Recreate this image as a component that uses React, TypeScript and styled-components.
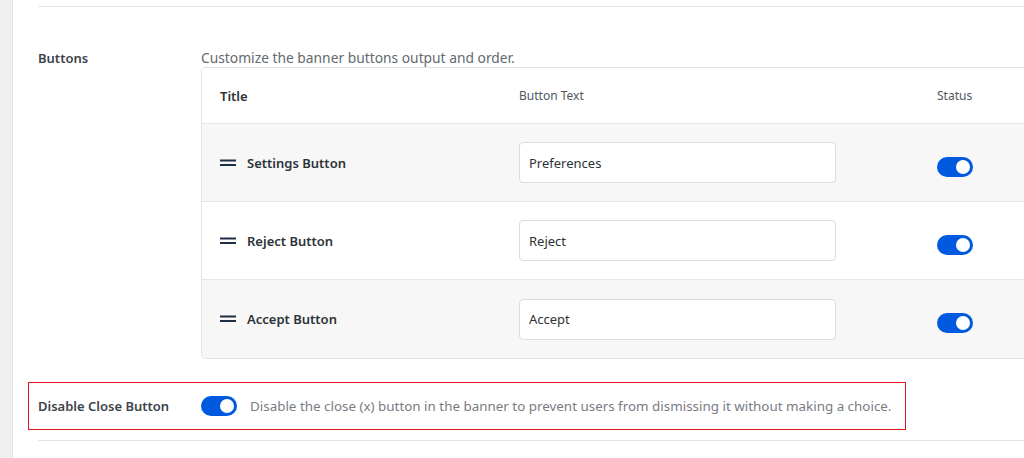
import React from "react";
import styled, { createGlobalStyle } from "styled-components";

const GlobalStyle = createGlobalStyle`
  html, body {
    margin: 0;
    padding: 0;
    background: #f0f0f1;
    font-family: "Noto Sans", "Open Sans", sans-serif;
  }
  * {
    box-sizing: border-box;
  }
`;

interface ButtonRow {
  id: string;
  title: string;
  text: string;
  enabled: boolean;
}

const rows: ButtonRow[] = [
  { id: "settings", title: "Settings Button", text: "Preferences", enabled: true },
  { id: "reject", title: "Reject Button", text: "Reject", enabled: true },
  { id: "accept", title: "Accept Button", text: "Accept", enabled: true },
];

const Toggle = ({ on }: { on: boolean }) => (
  <Switch $on={on}>
    <Knob $on={on} />
  </Switch>
);

const DragHandle = () => (
  <svg width="16" height="8" viewBox="0 0 16 8" aria-hidden="true">
    <rect x="0" y="0.5" width="16" height="2" fill="#1d2f45" />
    <rect x="0" y="5" width="16" height="2" fill="#1d2f45" />
  </svg>
);

const App = () => {
  return (
    <>
      <GlobalStyle />
      <Page>
        <Strip />
        <Panel>
          <Rule />
          <Setting>
            <Label>Buttons</Label>
            <Field>
              <Description>Customize the banner buttons output and order.</Description>
              <TableClip>
                <Table>
                  <HeadRow>
                    <HeadCell $strong>Title</HeadCell>
                    <HeadCell>Button Text</HeadCell>
                    <HeadCell>Status</HeadCell>
                  </HeadRow>
                  {rows.map((row, i) => (
                    <BodyRow key={row.id} $shaded={i % 2 === 0}>
                      <TitleCell>
                        <DragHandle />
                        <span>{row.title}</span>
                      </TitleCell>
                      <div>
                        <TextInput defaultValue={row.text} />
                      </div>
                      <StatusCell>
                        <Toggle on={row.enabled} />
                      </StatusCell>
                    </BodyRow>
                  ))}
                </Table>
              </TableClip>
            </Field>
          </Setting>
          <Highlight>
            <Label>Disable Close Button</Label>
            <Inline>
              <Toggle on />
              <Hint>
                Disable the close (x) button in the banner to prevent users from dismissing it without making a choice.
              </Hint>
            </Inline>
          </Highlight>
          <Rule />
        </Panel>
      </Page>
    </>
  );
};

export default App;

const Page = styled.div`
  display: flex;
  width: 100%;
  height: 458px;
  overflow: hidden;
`;

const Strip = styled.div`
  width: 12px;
  flex-shrink: 0;
  background: #f0f0f1;
`;

const Panel = styled.div`
  flex: 1;
  background: #ffffff;
  border-left: 1px solid #e2e4e7;
  padding: 6px 0 0 25px;
  overflow: hidden;
`;

const Rule = styled.div`
  height: 1px;
  background: #e2e4e7;
`;

const Setting = styled.div`
  display: flex;
  padding-top: 41px;
`;

const Label = styled.div`
  width: 163px;
  flex-shrink: 0;
  font-size: 13px;
  font-weight: 600;
  line-height: 20px;
  color: #3c434a;
`;

const Field = styled.div`
  display: flex;
  flex-direction: column;
`;

const Description = styled.p`
  margin: 0;
  font-size: 13.8px;
  line-height: 19px;
  color: #646970;
`;

const TableClip = styled.div`
  width: 830px;
`;

const Table = styled.div`
  width: 860px;
  border: 1px solid #e2e4e7;
  border-radius: 4px;
  overflow: hidden;
`;

const columns = `
  display: grid;
  grid-template-columns: 299px 418px 1fr;
  align-items: center;
  padding-left: 18px;
`;

const HeadRow = styled.div`
  ${columns}
  height: 56px;
  background: #ffffff;
  border-bottom: 1px solid #e6e6e6;
`;

const HeadCell = styled.div<{ $strong?: boolean }>`
  font-size: ${(p) => (p.$strong ? "13px" : "12px")};
  font-weight: ${(p) => (p.$strong ? 600 : 400)};
  color: ${(p) => (p.$strong ? "#2c3338" : "#50575e")};
`;

const BodyRow = styled.div<{ $shaded: boolean }>`
  ${columns}
  height: 78px;
  background: ${(p) => (p.$shaded ? "#f7f7f7" : "#ffffff")};
  border-bottom: 1px solid #e6e6e6;

  &:last-child {
    border-bottom: none;
  }
`;

const TitleCell = styled.div`
  display: flex;
  align-items: center;
  gap: 11px;
  font-size: 13px;
  font-weight: 600;
  color: #2c3338;
`;

const TextInput = styled.input`
  width: 317px;
  height: 41px;
  padding: 0 9px;
  border: 1px solid #dcdcde;
  border-radius: 4px;
  background: #ffffff;
  font-family: inherit;
  font-size: 13px;
  color: #2c3338;
  outline: none;
`;

const StatusCell = styled.div`
  display: flex;
  margin-top: 8px;
`;

const Switch = styled.span<{ $on: boolean }>`
  display: inline-flex;
  align-items: center;
  justify-content: ${(p) => (p.$on ? "flex-end" : "flex-start")};
  width: 36px;
  height: 20px;
  padding: 0 3px;
  border-radius: 10px;
  background: ${(p) => (p.$on ? "#005ae0" : "#c3c4c7")};
  flex-shrink: 0;
`;

const Knob = styled.span<{ $on: boolean }>`
  width: 14px;
  height: 14px;
  border-radius: 50%;
  background: #ffffff;
`;

const Highlight = styled.div`
  display: flex;
  align-items: center;
  width: 878px;
  height: 48px;
  margin: 23px 0 10px -10px;
  padding-left: 9px;
  border: 1px solid #e0161e;
`;

const Inline = styled.div`
  display: flex;
  align-items: center;
  gap: 13px;
`;

const Hint = styled.span`
  font-size: 13.4px;
  color: #787c82;
`;
